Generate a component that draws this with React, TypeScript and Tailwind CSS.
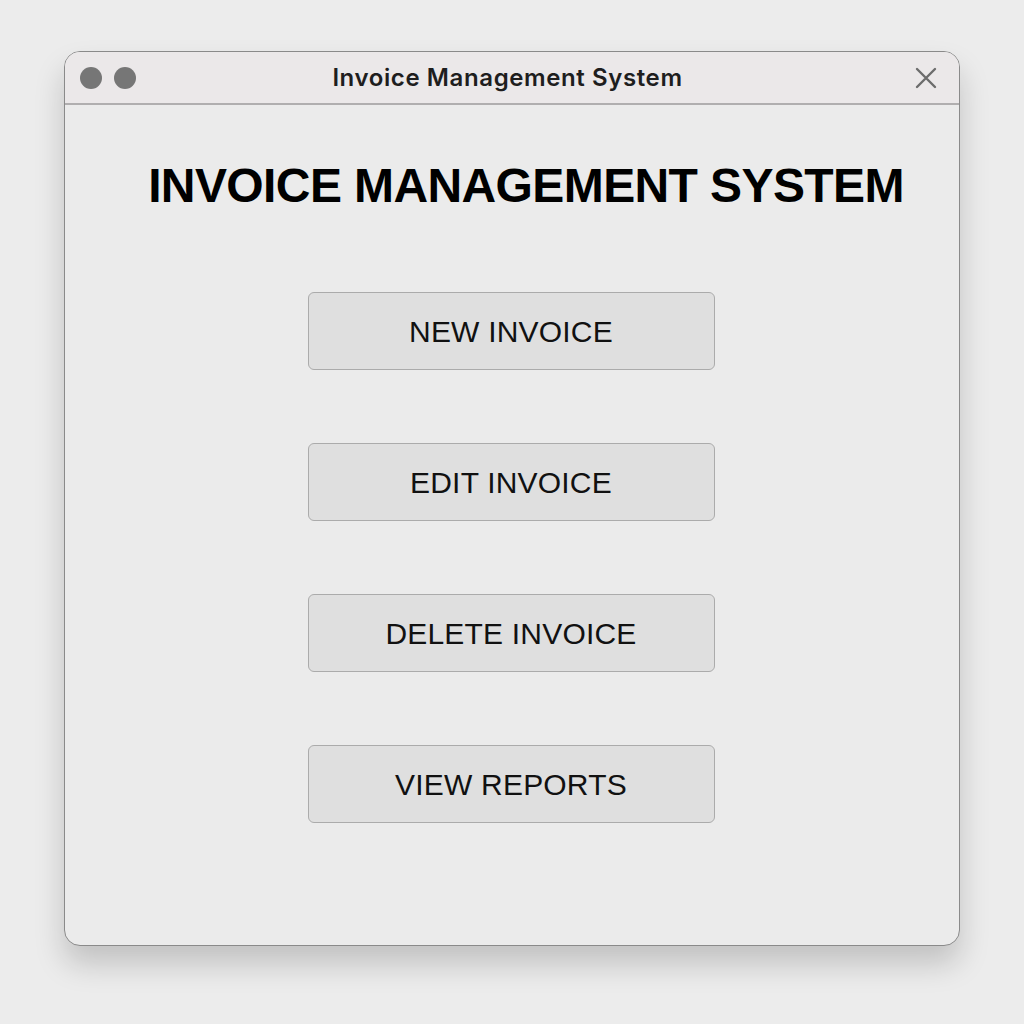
const actions = ["NEW INVOICE", "EDIT INVOICE", "DELETE INVOICE", "VIEW REPORTS"];

export default function App() {
  return (
    <div className="min-h-screen w-full bg-[#ececec] pt-[51px] pl-[64px] font-['Liberation_Sans',Arial,sans-serif]">
      <div className="flex h-[895px] w-[896px] flex-col overflow-hidden rounded-[16px] border border-[#8a8a8a] bg-[#ebebeb] shadow-[0_18px_30px_rgba(0,0,0,0.18)]">
        {/* title bar */}
        <div className="flex h-[53px] shrink-0 items-center border-b-2 border-[#b0aeaf] bg-[#ebe8e9] px-[15px]">
          <div className="flex w-[120px] gap-[12px]">
            <span className="h-[22px] w-[22px] rounded-full bg-[#767676]" />
            <span className="h-[22px] w-[22px] rounded-full bg-[#767676]" />
          </div>
          <div className="flex-1 pr-[9px] text-center font-['Inter',sans-serif] text-[24px] font-semibold tracking-[0.6px] text-[#1e1e1e]">
            Invoice Management System
          </div>
          <div className="flex w-[120px] justify-end pr-[7px]">
            <svg width="22" height="22" viewBox="0 0 22 22" className="text-[#6c6c6c]">
              <path d="M2 2 L20 20 M20 2 L2 20" stroke="currentColor" strokeWidth="2.4" strokeLinecap="round" />
            </svg>
          </div>
        </div>

        {/* body */}
        <div className="flex flex-1 flex-col items-center pt-[57px] pr-[2px]">
          <h1 className="pl-[30px] text-[48px] leading-none font-bold tracking-[-0.6px] text-black">
            INVOICE MANAGEMENT SYSTEM
          </h1>
          <div className="mt-[82px] flex flex-col gap-[73px]">
            {actions.map((a) => (
              <button
                key={a}
                className="flex h-[78px] w-[407px] items-center justify-center rounded-[6px] border border-[#ababab] bg-[#dfdfdf] text-[30px] tracking-[0.2px] text-[#111]"
              >
                {a}
              </button>
            ))}
          </div>
        </div>
      </div>
    </div>
  );
}
